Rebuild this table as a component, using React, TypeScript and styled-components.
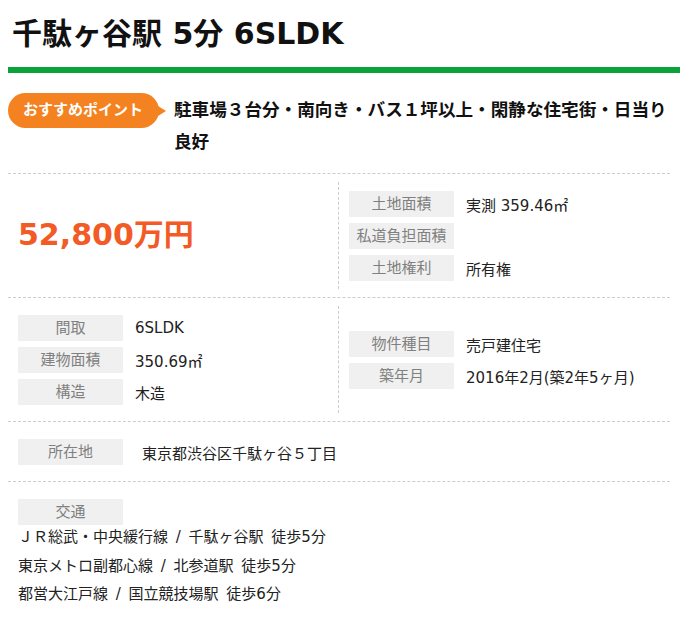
import React from 'react';
import styled, { createGlobalStyle } from 'styled-components';

const GlobalStyle = createGlobalStyle`
  body {
    margin: 8px;
    background: #fff;
    font-family: "DejaVu Sans", "Noto Sans CJK JP", sans-serif;
    color: #222;
  }
`

interface Spec {
  label: string;
  value?: string;
}

const landSpecs: Spec[] = [
  { label: '土地面積', value: '実測 359.46㎡' },
  { label: '私道負担面積' },
  { label: '土地権利', value: '所有権' }
]

const buildingSpecs: Spec[] = [
  { label: '間取', value: '6SLDK' },
  { label: '建物面積', value: '350.69㎡' },
  { label: '構造', value: '木造' }
]

const typeSpecs: Spec[] = [
  { label: '物件種目', value: '売戸建住宅' },
  { label: '築年月', value: '2016年2月(築2年5ヶ月)' }
]

const access = [
  'ＪＲ総武・中央緩行線 / 千駄ヶ谷駅 徒歩5分',
  '東京メトロ副都心線 / 北参道駅 徒歩5分',
  '都営大江戸線 / 国立競技場駅 徒歩6分'
]

const SpecList: React.FC<{ items: Spec[] }> = ({ items }) => (
  <List>
    {items.map(item => (
      <SpecRow key={item.label}>
        <Label>{item.label}</Label>
        <Value>{item.value}</Value>
      </SpecRow>
    ))}
  </List>
)

export default function App() {
  return (
    <Page>
      <GlobalStyle />
      <Title>千駄ヶ谷駅 5分 6SLDK</Title>
      <GreenBar />

      <PointRow>
        <Badge>おすすめポイント</Badge>
        <PointText>駐車場３台分・南向き・バス１坪以上・閑静な住宅街・日当り良好</PointText>
      </PointRow>

      <Table>
        <Section>
          <Cell>
            <Price>52,800万円</Price>
          </Cell>
          <Cell divided>
            <SpecList items={landSpecs} />
          </Cell>
        </Section>

        <Section>
          <Cell>
            <SpecList items={buildingSpecs} />
          </Cell>
          <Cell divided>
            <SpecList items={typeSpecs} />
          </Cell>
        </Section>

        <Block>
          <SpecRow>
            <Label>所在地</Label>
            <Value gap={19}>東京都渋谷区千駄ヶ谷５丁目</Value>
          </SpecRow>
        </Block>

        <Block>
          <Label>交通</Label>
          <AccessList>
            {access.map(line => (
              <AccessLine key={line}>{line}</AccessLine>
            ))}
          </AccessList>
        </Block>
      </Table>
    </Page>
  )
}

const Page = styled.div`
  width: 680px;
`

const Title = styled.h1`
  margin: 6px 0 0 4px;
  font-size: 30px;
  line-height: 40px;
  font-weight: 700;
  color: #111;
`

const GreenBar = styled.div`
  height: 6px;
  margin-top: 13px;
  background-color: #09a33a;
`

const PointRow = styled.div`
  display: flex;
  align-items: flex-start;
  width: 662px;
  margin-top: 20px;
  padding-bottom: 15px;
`

const Badge = styled.div`
  position: relative;
  flex: none;
  height: 35px;
  padding: 0 16px 0 15px;
  border-radius: 18px;
  background-color: #f58220;
  color: #fff;
  font-size: 15px;
  font-weight: 700;
  line-height: 35px;

  &::after {
    content: '';
    position: absolute;
    right: -7px;
    top: 13px;
    border-left: 8px solid #f58220;
    border-top: 5px solid transparent;
    border-bottom: 5px solid transparent;
  }
`

const PointText = styled.div`
  margin: 1px 0 0 15px;
  font-size: 17.6px;
  font-weight: 700;
  line-height: 32px;
  color: #111;
`

const Table = styled.div`
  width: 662px;
`

const Section = styled.div`
  display: grid;
  grid-template-columns: 330px 1fr;
  border-top: 1px dashed #ccc;
`

const Cell = styled.div<{ divided?: boolean }>`
  display: flex;
  align-items: center;
  margin: 8px 0;
  padding: 9px 10px 8px;
  border-left: ${props => props.divided ? '1px dashed #ccc' : 'none'};
`

const Price = styled.div`
  margin-top: -8px;
  font-size: 30px;
  font-weight: 700;
  color: #f25a26;
`

const List = styled.div`
  display: flex;
  flex-direction: column;
  gap: 6px;
`

const SpecRow = styled.div`
  display: flex;
  align-items: center;
`

const Label = styled.div`
  flex: none;
  width: 105px;
  height: 26px;
  background-color: #f0f0f0;
  color: #808080;
  font-size: 15px;
  line-height: 26px;
  text-align: center;
`

const Value = styled.div<{ gap?: number }>`
  padding-left: ${props => props.gap ?? 12}px;
  font-size: 15px;
  color: #222;
`

const Block = styled.div`
  padding: 17px 10px 16px;
  border-top: 1px dashed #ccc;
`

const AccessList = styled.div`
  margin-top: -2px;
`

const AccessLine = styled.div`
  font-size: 15px;
  line-height: 28.5px;
  word-spacing: 3px;
  color: #222;
`
